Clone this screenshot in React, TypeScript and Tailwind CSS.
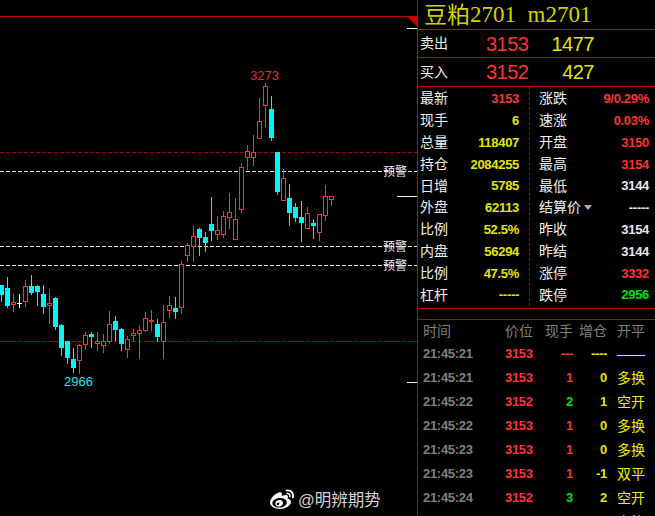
import { FaWeibo } from 'react-icons/fa';

type Candle = [kind: 'r' | 'c' | 'w', high: number, top: number, bottom: number, low: number];

// wick top, body top, body bottom, wick bottom - first candle sits at x=1, one every 6px
const candles: Candle[] = [
  ['c', 285, 285, 295, 302], ['c', 277, 288, 306, 308], ['r', 294, 302, 305, 312], ['w', 294, 303, 304, 308],
  ['r', 280, 286, 302, 307], ['c', 275, 286, 293, 295], ['c', 285, 286, 292, 306], ['c', 285, 294, 307, 314],
  ['r', 289, 303, 306, 324], ['c', 297, 298, 327, 330], ['c', 324, 325, 348, 356], ['c', 341, 341, 358, 364],
  ['c', 348, 359, 368, 373], ['r', 344, 345, 361, 374], ['r', 332, 335, 345, 350], ['c', 332, 334, 337, 348],
  ['r', 332, 341, 344, 351], ['r', 334, 341, 346, 353], ['r', 311, 324, 342, 344], ['c', 316, 321, 330, 341],
  ['c', 328, 329, 344, 351], ['r', 336, 339, 350, 358], ['r', 329, 333, 336, 342], ['r', 325, 330, 334, 359],
  ['r', 312, 318, 331, 332], ['r', 310, 320, 322, 331], ['c', 319, 324, 337, 342], ['r', 305, 322, 342, 359],
  ['r', 296, 305, 311, 318], ['c', 297, 308, 312, 319], ['r', 261, 264, 308, 314], ['r', 243, 245, 256, 262],
  ['r', 226, 236, 247, 262], ['c', 228, 229, 238, 256], ['c', 232, 237, 243, 252], ['c', 197, 224, 231, 241],
  ['r', 216, 230, 235, 240], ['r', 211, 216, 235, 238], ['r', 193, 212, 218, 229], ['r', 198, 219, 240, 240],
  ['r', 163, 167, 210, 213], ['r', 145, 151, 158, 170], ['r', 135, 152, 158, 166], ['r', 98, 121, 139, 139],
  ['r', 83, 86, 106, 127], ['c', 96, 109, 138, 141], ['c', 152, 152, 192, 195], ['r', 169, 178, 201, 201],
  ['c', 184, 198, 213, 226], ['c', 203, 207, 218, 222], ['c', 201, 217, 223, 242], ['r', 207, 213, 229, 229],
  ['c', 219, 223, 226, 239], ['r', 214, 214, 233, 241], ['r', 185, 196, 216, 221], ['r', 196, 196, 200, 206],
];

const RED = '#ff3232';
const CYAN = '#00f5f5';

const CN = "font-['Liberation_Sans','Noto_Sans_CJK_SC',sans-serif]";
const NUM = "font-['Liberation_Sans',sans-serif] font-bold text-[13px] tracking-[-0.3px]";

const tone = {
  red: 'text-[#ff3232]',
  yellow: 'text-[#e6e600]',
  white: 'text-[#e8e8f0]',
  green: 'text-[#00e000]',
};

type Tone = keyof typeof tone;

const leftQuote: [string, string, Tone][] = [
  ['最新', '3153', 'red'],
  ['现手', '6', 'yellow'],
  ['总量', '118407', 'yellow'],
  ['持仓', '2084255', 'yellow'],
  ['日增', '5785', 'yellow'],
  ['外盘', '62113', 'yellow'],
  ['比例', '52.5%', 'yellow'],
  ['内盘', '56294', 'yellow'],
  ['比例', '47.5%', 'yellow'],
  ['杠杆', '-----', 'yellow'],
];

const rightQuote: [string, string, Tone][] = [
  ['涨跌', '9/0.29%', 'red'],
  ['速涨', '0.03%', 'red'],
  ['开盘', '3150', 'red'],
  ['最高', '3154', 'red'],
  ['最低', '3144', 'white'],
  ['结算价', '-----', 'white'],
  ['昨收', '3154', 'white'],
  ['昨结', '3144', 'white'],
  ['涨停', '3332', 'red'],
  ['跌停', '2956', 'green'],
];

const trades: [string, string, string, Tone, string, Tone, string][] = [
  ['21:45:21', '3153', '---', 'red', '----', 'yellow', '——'],
  ['21:45:21', '3153', '1', 'red', '0', 'yellow', '多换'],
  ['21:45:22', '3152', '2', 'green', '1', 'yellow', '空开'],
  ['21:45:22', '3153', '1', 'red', '0', 'yellow', '多换'],
  ['21:45:23', '3153', '1', 'red', '0', 'yellow', '多换'],
  ['21:45:23', '3153', '1', 'red', '-1', 'yellow', '双平'],
  ['21:45:24', '3152', '3', 'green', '2', 'yellow', '空开'],
  ['21:45:24', '3153', '1', 'red', '0', 'yellow', '多换'],
];

function Chart() {
  return (
    <svg width={417} height={516} shapeRendering="crispEdges" className="absolute inset-0">
      <rect x={0} y={16} width={417} height={1} fill="#c80000" />
      <polygon points="407,17 417,17 417,27" fill="#c80000" />
      <rect x={407} y={28} width={10} height={1} fill="#f0f0f0" />
      <rect x={397} y={196} width={20} height={1} fill="#f0f0f0" />
      <rect x={407} y={382} width={10} height={1} fill="#f0f0f0" />

      {[152, 341].map((y) => (
        <line key={y} x1={0} x2={417} y1={y + 0.5} y2={y + 0.5} stroke="#a80000" strokeDasharray="4 2" />
      ))}
      {[171, 246, 265].map((y) => (
        <line key={y} x1={0} x2={417} y1={y + 0.5} y2={y + 0.5} stroke="#f0f0f0" strokeDasharray="4 2" />
      ))}

      {candles.map(([kind, high, top, bottom, low], i) => {
        const x = 1 + i * 6;
        const color = kind === 'r' ? RED : kind === 'c' ? CYAN : '#ffffff';
        return (
          <g key={i}>
            <rect x={x} y={high} width={1} height={low - high} fill={color} />
            {kind === 'r' ? (
              <rect x={x - 1.5} y={top + 0.5} width={4} height={bottom - top - 1} fill="#000" stroke={color} />
            ) : (
              <rect x={x - 2} y={top} width={5} height={bottom - top} fill={color} />
            )}
          </g>
        );
      })}
    </svg>
  );
}

function QuoteRow({ label, value, color, arrow }: { label: string; value: string; color: Tone; arrow?: boolean }) {
  return (
    <div className="flex items-center justify-between h-[21.8px]">
      <span className="flex items-center gap-[3px] text-[14px] text-[#f0f0f0]">
        {label}
        {arrow && <span className="w-0 h-0 border-x-4 border-x-transparent border-t-[5px] border-t-[#b0b0b0]" />}
      </span>
      <span className={`${NUM} ${tone[color]}`}>{value}</span>
    </div>
  );
}

function BookRow({ label, price, size, height }: { label: string; price: string; size: string; height: string }) {
  return (
    <div className={`flex items-center shrink-0 border-b border-[#c80000] ${height}`}>
      <span className="w-[68px] pl-[2px] text-[14px] text-[#f0f0f0]">{label}</span>
      <span className="w-[42px] text-right font-['Liberation_Sans',sans-serif] text-[20px] tracking-[-0.5px] text-[#ff3232]">{price}</span>
      <span className="w-[66px] text-right font-['Liberation_Sans',sans-serif] text-[20px] tracking-[-0.5px] text-[#e6e600]">{size}</span>
    </div>
  );
}

export default function App() {
  return (
    <div className={`${CN} flex w-[655px] h-[516px] overflow-hidden bg-black`}>
      <div className="relative w-[417px] h-full shrink-0">
        <Chart />
        <span className="absolute left-[250px] top-[68px] font-['Liberation_Sans',sans-serif] text-[13px] leading-[15px] text-[#e03030]">3273</span>
        <span className="absolute left-[64px] top-[374px] font-['Liberation_Sans',sans-serif] text-[13px] leading-[15px] text-[#20e0f0]">2966</span>
        <span className="absolute left-[383px] top-[164px] text-[12px] leading-[16px] text-[#f0f0f0]">预警</span>
        <span className="absolute left-[383px] top-[239px] text-[12px] leading-[16px] text-[#f0f0f0]">预警</span>
        <span className="absolute left-[383px] top-[258px] text-[12px] leading-[16px] text-[#f0f0f0]">预警</span>
        <div className="absolute left-[270px] top-[488px] flex items-center gap-[4px] text-[#d4d4d4]">
          <FaWeibo size={24} className="text-white" />
          <span className="text-[16.5px] leading-[24px] whitespace-nowrap">@明辨期势</span>
        </div>
      </div>

      <div className="flex flex-col flex-1 min-w-0 border-l border-[#c80000]">
        <div className="flex items-center shrink-0 h-[30px] pl-[6px] border-b border-[#c80000] text-[#d2d200] whitespace-pre">
          <span className="text-[23px] leading-[28px]">豆粕</span>
          <span className="font-['Liberation_Serif',serif] text-[23px] leading-[28px]">2701  m2701</span>
        </div>
        <BookRow label="卖出" price="3153" size="1477" height="h-[28px]" />
        <BookRow label="买入" price="3152" size="427" height="h-[29px]" />

        <div className="flex shrink-0 h-[222px] border-b border-[#c80000]">
          <div className="w-[112px] h-[219px] pl-[2px] pr-[10px] pt-[1px] border-r border-dashed border-[#c80000]">
            {leftQuote.map(([label, value, color], i) => (
              <QuoteRow key={i} label={label} value={value} color={color} />
            ))}
          </div>
          <div className="flex-1 pl-[9px] pr-[6px] pt-[1px]">
            {rightQuote.map(([label, value, color]) => (
              <QuoteRow key={label} label={label} value={value} color={color} arrow={label === '结算价'} />
            ))}
          </div>
        </div>

        <div className="shrink-0 h-[11px] border-b border-[#c80000]" />

        <div className="flex items-center shrink-0 h-[22px] pl-[5px] text-[14px] text-[#808080]">
          <span className="w-[82px]">时间</span>
          <span className="w-[40px]">价位</span>
          <span className="w-[28px] text-right">现手</span>
          <span className="w-[34px] text-right">增仓</span>
          <span className="ml-[10px]">开平</span>
        </div>

        {trades.map(([time, price, hand, handTone, oi, oiTone, type], i) => (
          <div key={i} className="flex items-center h-6 shrink-0 pl-[5px]">
            <span className={`${NUM} w-[82px] text-[#808080]`}>{time}</span>
            <span className={`${NUM} w-[40px] ${tone.red}`}>{price}</span>
            <span className={`${NUM} w-[28px] text-right ${tone[handTone]}`}>{hand}</span>
            <span className={`${NUM} w-[34px] text-right ${tone[oiTone]}`}>{oi}</span>
            <span className="ml-[10px] text-[14px] text-[#f0f000]">{type}</span>
          </div>
        ))}
      </div>
    </div>
  );
}
